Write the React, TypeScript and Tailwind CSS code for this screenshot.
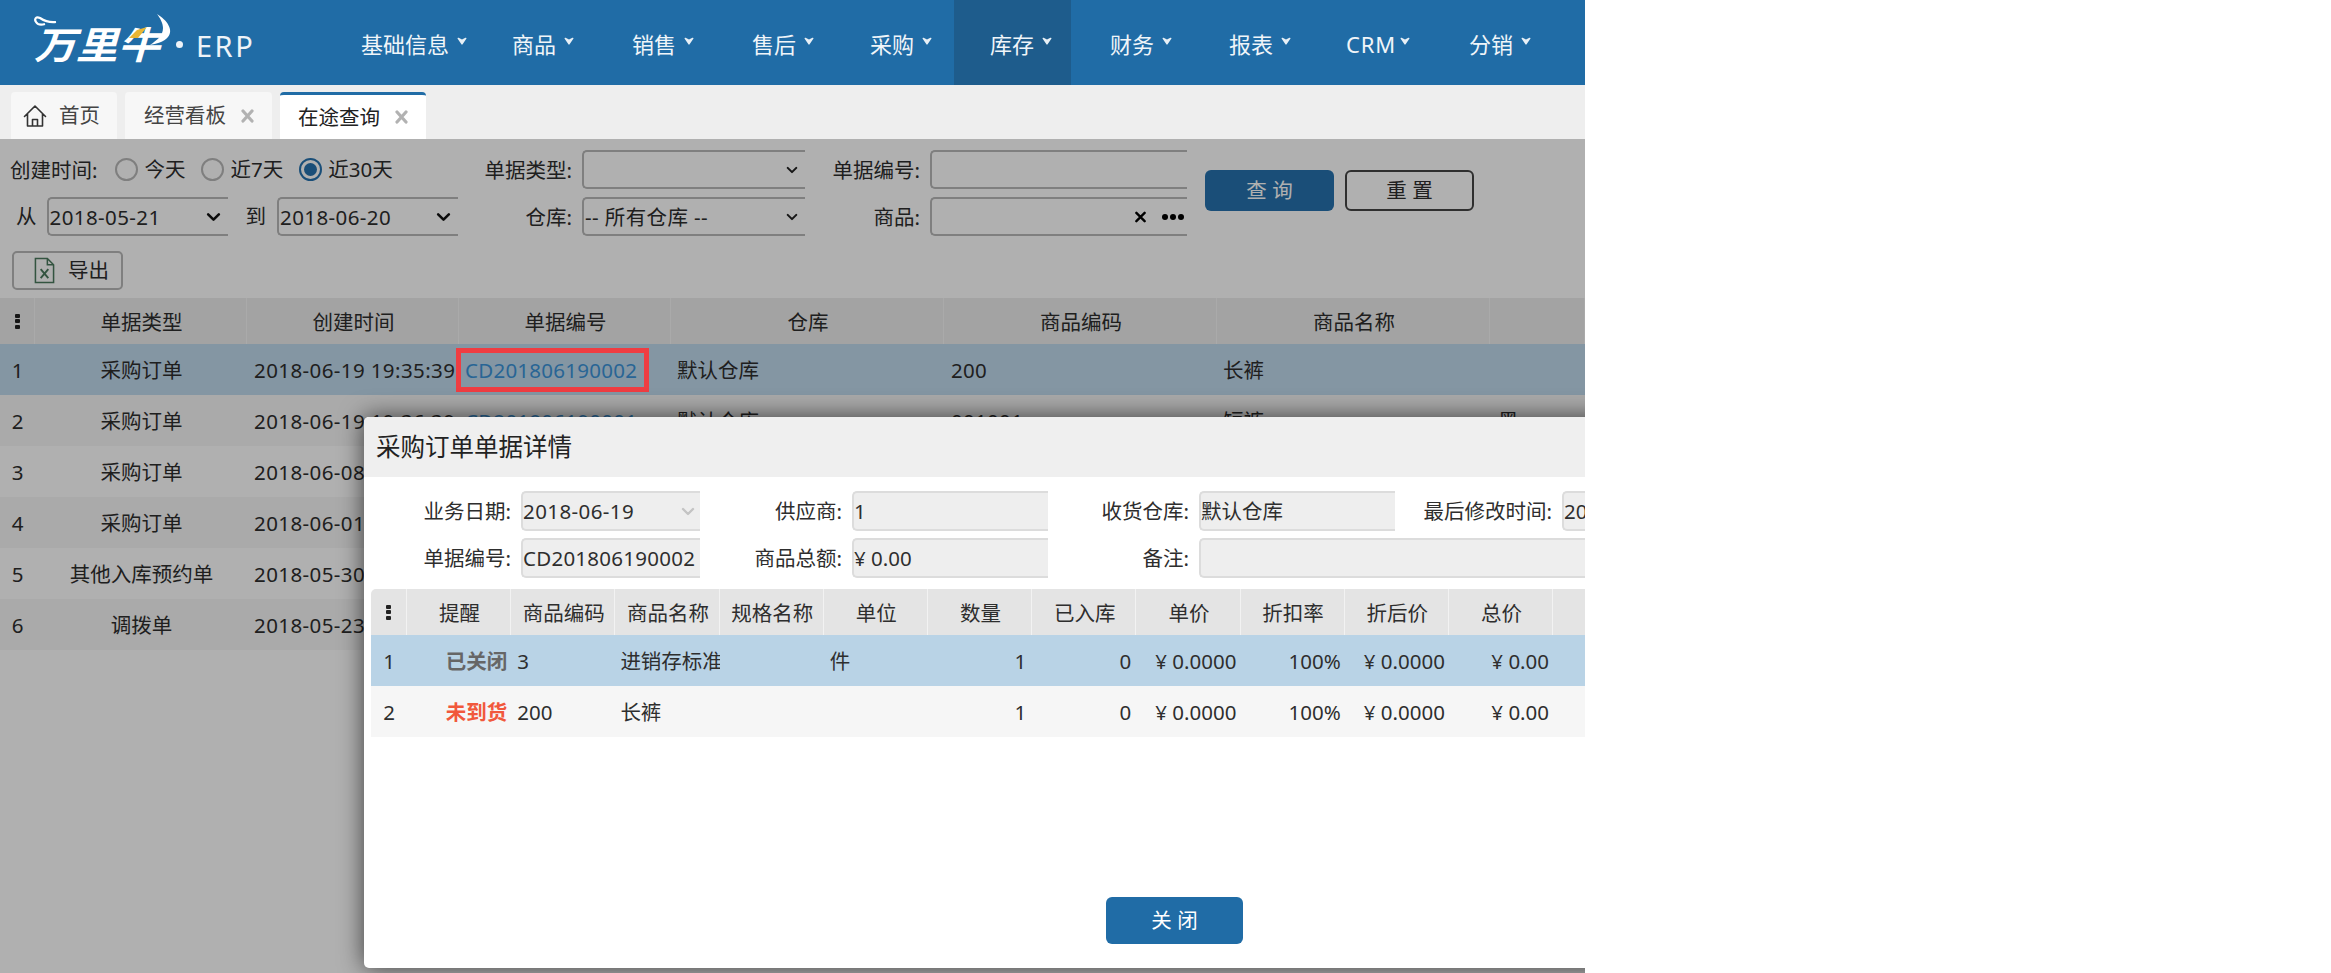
import React from "react";

const Chevron = ({ cls }: { cls: string }) => (
  <svg viewBox="0 0 14 9" className={cls} fill="none" stroke="currentColor" strokeWidth="2.4" strokeLinecap="round" strokeLinejoin="round">
    <path d="M2 2 L7 7 L12 2" />
  </svg>
);

const Caret = ({ crm }: { crm?: boolean }) => (
  <svg viewBox="0 0 10 8" className={`w-[10px] h-[8px] mb-[6px] shrink-0 ${crm ? "ml-[4px]" : "ml-[8px]"}`} fill="#e8f0f6">
    <path d="M0.5 1.5 Q0.5 0.4 1.6 0.8 L5 2.4 L8.4 0.8 Q9.5 0.4 9.5 1.5 L5.6 7.3 Q5 8 4.4 7.3 Z" />
  </svg>
);

const Kebab = () => (
  <div className="flex flex-col gap-[1.5px] items-center">
    <span className="w-[5px] h-[4px] rounded-[1px] bg-[#222]" />
    <span className="w-[5px] h-[4px] rounded-[1px] bg-[#222]" />
    <span className="w-[5px] h-[4px] rounded-[1px] bg-[#222]" />
  </div>
);

const TabX = () => (
  <svg viewBox="0 0 13 14" className="w-[13px] h-[14px] ml-[15px] shrink-0" stroke="#b2b2b2" strokeWidth="3.2" strokeLinecap="round">
    <path d="M2 2 L11 12 M11 2 L2 12" />
  </svg>
);

const Logo = () => (
  <svg viewBox="0 0 150 52" className="absolute left-[28px] top-[11px] w-[150px] h-[52px]">
    <path d="M28 11 C20 12 15 9 12 7 C8 5 6 8 8 11 C10 14 14 14 17 13" fill="none" stroke="#fff" strokeWidth="2.2" />
    <path d="M129 3 C139 9 146 19 140 26 C136 31 128 33 122 34 C129 29 135 25 135 17 C135 12 132 7 129 3 Z" fill="#fff" />
    <text x="0" y="0" transform="translate(6 48) skewX(-16) scale(1.02 0.92)" fill="#fff" fontSize="41" fontWeight="700" fontFamily="'Noto Sans CJK SC', sans-serif">万里牛</text>
    <polygon points="101,27 109,19 119,16 110,27" fill="#e9b634" />
  </svg>
);

const navItems = [
  { t: "基础信息", w: "w-[148px]" },
  { t: "商品", w: "w-[117px]" },
  { t: "销售", w: "w-[117px]" },
  { t: "售后", w: "w-[115px]" },
  { t: "采购", w: "w-[117px]" },
  { t: "库存", w: "w-[117px]", active: true },
  { t: "财务", w: "w-[116px]" },
  { t: "报表", w: "w-[114px]" },
  { t: "CRM", w: "w-[120px]", crm: true },
  { t: "分销", w: "w-[112px]" },
];

const Radio = ({ on }: { on?: boolean }) => (
  <span className={`w-[23px] h-[23px] rounded-full border-2 bg-transparent flex items-center justify-center shrink-0 ${on ? "border-[#2672ae]" : "border-[#b8b8b8]"}`}>
    {on && <span className="w-[13px] h-[13px] rounded-full bg-[#2672ae]" />}
  </span>
);

const Box = ({ cls, children }: { cls?: string; children?: React.ReactNode }) => (
  <div className={`h-[39px] flex items-center pl-[1px] pt-[1px] border-2 border-r-0 border-[#b8b8b8] rounded-l-[5px] ${cls ?? ""}`}>{children}</div>
);

const mainCols = "grid grid-cols-[35px_212px_212px_212px_273px_273px_273px_1fr]";
const mainHead = ["单据类型", "创建时间", "单据编号", "仓库", "商品编码", "商品名称", ""];
const mainRows = [
  ["采购订单", "2018-06-19 19:35:39", "CD201806190002", "默认仓库", "200", "长裤", ""],
  ["采购订单", "2018-06-19 19:36:39", "CD201806190001", "默认仓库", "001001", "短裤", "黑"],
  ["采购订单", "2018-06-08 10:21:06", "CD201806080001", "默认仓库", "001001", "短裤", "黑"],
  ["采购订单", "2018-06-01 15:02:47", "CD201806010001", "默认仓库", "200", "长裤", ""],
  ["其他入库预约单", "2018-05-30 09:44:18", "YY201805300001", "默认仓库", "200", "长裤", ""],
  ["调拨单", "2018-05-23 11:12:33", "DB201805230001", "默认仓库", "200", "长裤", ""],
];

const subCols = "grid grid-cols-[36px_repeat(11,104.2px)_1fr]";
const subHead = ["提醒", "商品编码", "商品名称", "规格名称", "单位", "数量", "已入库", "单价", "折扣率", "折后价", "总价", ""];
const subRows = [
  { bg: "bg-[#b9d3e6]", s: "已关闭", c: "text-[#666]", code: "3", name: "进销存标准", unit: "件" },
  { bg: "bg-[#f6f6f6]", s: "未到货", c: "text-[#f1583c]", code: "200", name: "长裤", unit: "" },
];

const Field = ({ children, cls }: { children?: React.ReactNode; cls?: string }) => (
  <div className={`h-[40px] flex items-center pt-[1px] bg-[#eeeeee] border-2 border-r-0 border-[#dcdcdc] rounded-l-[5px] overflow-hidden whitespace-nowrap ${cls ?? ""}`}>{children}</div>
);

const L = ({ children }: { children: React.ReactNode }) => (
  <div className="text-right pr-[10px] pt-[1px] whitespace-nowrap">{children}</div>
);

export default function App() {
  return (
    <div className="w-[2331px] h-[973px] bg-white overflow-hidden text-[20.5px] leading-none text-[#2e2e2e] [font-family:'Noto_Sans','Noto_Sans_CJK_SC',sans-serif]">
      <div className="relative w-[1585px] h-[973px] overflow-hidden bg-white">
        {/* Header */}
        <header className="relative h-[85px] bg-[#206ca6] flex text-white">
          <Logo />
          <div className="absolute left-[176px] top-[41px] w-[7px] h-[7px] rounded-full bg-[#eef3f8]" />
          <div className="absolute left-[196px] top-[29px] text-[29px] leading-[34px] font-normal tracking-[2.5px] text-[#eef3f8]">ERP</div>
          <nav className="flex ml-[325px] gap-[3px] text-[22px] text-[#f0f5f9]">
            {navItems.map((n) => (
              <div key={n.t} className={`${n.w} pl-[36px] pt-[3px] flex items-center shrink-0 ${n.active ? "bg-[#1e5c8c]" : ""}`}>
                <span className={n.crm ? "tracking-[0.8px]" : ""}>{n.t}</span>
                <Caret crm={n.crm} />
              </div>
            ))}
          </nav>
        </header>

        {/* Tabs */}
        <div className="h-[54px] bg-[#eeeeee] flex items-end pl-[11px] gap-[8px]">
          <div className="w-[106px] h-[47px] bg-[#f7f7f7] rounded-t-[4px] flex items-center pl-[12px] gap-[12px] text-[#444]">
            <svg viewBox="0 0 24 24" className="w-[24px] h-[24px]" fill="none" stroke="#333" strokeWidth="1.6" strokeLinejoin="round" strokeLinecap="round">
              <path d="M1.5 12.5 L12 2 L22.5 12.5 M4.5 10 V22 H19.5 V10 M9.5 22 V15.5 H14.5 V22" />
            </svg>
            <span>首页</span>
          </div>
          <div className="w-[147px] h-[47px] bg-[#f7f7f7] rounded-t-[4px] flex items-center pl-[19px] text-[#444]">
            <span>经营看板</span>
            <TabX />
          </div>
          <div className="w-[146px] h-[47px] bg-white rounded-t-[4px] border-t-[3px] border-[#206ca6] flex items-center pl-[18px] text-[#222]">
            <span>在途查询</span>
            <TabX />
          </div>
        </div>

        {/* Filters */}
        <section className="flex pt-[11px] h-[112px]">
          <div className="w-[476px] flex flex-col gap-[8px]">
            <div className="h-[39px] flex items-center pl-[10px]">
              <span className="whitespace-nowrap pt-[2px]">创建时间:</span>
              <span className="ml-[17px]"><Radio /></span>
              <span className="ml-[7px]">今天</span>
              <span className="ml-[15px]"><Radio /></span>
              <span className="ml-[7px]">近7天</span>
              <span className="ml-[16px]"><Radio on /></span>
              <span className="ml-[6px]">近30天</span>
            </div>
            <div className="h-[39px] flex items-center pl-[16px]">
              <span>从</span>
              <Box cls="w-[181px] ml-[10px] justify-between">
                <span className="tracking-[0.4px]">2018-05-21</span>
                <Chevron cls="w-[15px] h-[10px] mr-[7px] text-[#111]" />
              </Box>
              <span className="ml-[18px]">到</span>
              <Box cls="w-[181px] ml-[11px] justify-between">
                <span className="tracking-[0.4px]">2018-06-20</span>
                <Chevron cls="w-[15px] h-[10px] mr-[7px] text-[#111]" />
              </Box>
            </div>
          </div>
          <div className="grid grid-cols-[106px_223px_125px_257px] gap-y-[8px] content-start items-center">
            <L>单据类型:</L>
            <Box cls="justify-end"><Chevron cls="w-[12px] h-[8px] mr-[7px] text-[#222]" /></Box>
            <div className="text-right pr-[10px] pt-[1px]">单据编号:</div>
            <Box />
            <L>仓库:</L>
            <Box cls="justify-between">
              <span className="tracking-[0.4px] whitespace-pre">-- 所有仓库 --</span>
              <Chevron cls="w-[12px] h-[8px] mr-[7px] text-[#222]" />
            </Box>
            <div className="text-right pr-[10px] pt-[1px]">商品:</div>
            <Box cls="justify-end pr-[3px] gap-[16px] text-[#000]">
              <svg viewBox="0 0 12 12" className="w-[11px] h-[12px]" stroke="#000" strokeWidth="2.6" strokeLinecap="round"><path d="M1.5 1.5 L10.5 10.5 M10.5 1.5 L1.5 10.5" /></svg>
              <span className="flex gap-[2px]">
                <span className="w-[6px] h-[6px] rounded-full bg-black" />
                <span className="w-[6px] h-[6px] rounded-full bg-black" />
                <span className="w-[6px] h-[6px] rounded-full bg-black" />
              </span>
            </Box>
          </div>
          <div className="flex gap-[11px] ml-[18px] mt-[20px] h-[41px]">
            <div className="w-[129px] bg-[#2672ae] rounded-[6px] text-white flex items-center justify-center">查 询</div>
            <div className="w-[129px] border-2 border-[#444] rounded-[6px] flex items-center justify-center">重 置</div>
          </div>
        </section>
        <div className="h-[47px] pl-[12px]">
          <div className="w-[111px] h-[39px] border-2 border-[#b8b8b8] rounded-[5px] flex items-center pl-[20px] gap-[13px]">
            <svg viewBox="0 0 22 28" className="w-[21px] h-[27px] shrink-0" fill="none" stroke="#4b7a5e" strokeWidth="1.6">
              <path d="M1.5 1.5 H14 L20.5 8 V26.5 H1.5 Z M14 1.5 V8 H20.5" />
              <path d="M7 12.5 L15 22 M15 12.5 L7 22" strokeWidth="2" />
            </svg>
            <span>导出</span>
          </div>
        </div>

        {/* Main table */}
        <div className={`${mainCols} h-[46px] bg-[#ececec]`}>
          <div className="flex items-center justify-center border-r border-[#f6f6f6]"><Kebab /></div>
          {mainHead.map((h, i) => (
            <div key={i} className="flex items-center justify-center pt-[2px] pl-[2px] border-r border-[#f6f6f6] whitespace-nowrap">{h}</div>
          ))}
        </div>
        {mainRows.map((r, i) => (
          <div key={i} className={`${mainCols} h-[51px] pt-[2px] items-center ${i === 0 ? "bg-[#c0d9ec]" : i % 2 === 1 ? "bg-[#f6f6f6]" : "bg-white"}`}>
            <div className="text-center">{i + 1}</div>
            <div className="text-center pl-[1px] whitespace-nowrap">{r[0]}</div>
            <div className="pl-[7px] whitespace-nowrap tracking-[0.4px]">{r[1]}</div>
            <div className="pl-[6px] whitespace-nowrap tracking-[0.25px] text-[#3a93d8]">{r[2]}</div>
            <div className="pl-[6px] whitespace-nowrap">{r[3]}</div>
            <div className="pl-[7px] whitespace-nowrap tracking-[0.3px]">{r[4]}</div>
            <div className="pl-[6px] whitespace-nowrap">{r[5]}</div>
            <div className="pl-[8px] whitespace-nowrap">{r[6]}</div>
          </div>
        ))}

        {/* Dim layer */}
        <div className="absolute left-0 right-0 top-[139px] bottom-0 bg-black/[.31]" />
        {/* Annotation */}
        <div className="absolute left-[456px] top-[348px] w-[193px] h-[44px] border-[5px] border-[#ef3d42]" />

        {/* Modal */}
        <div className="absolute left-[364px] top-[417px] w-[1621px] h-[551px] bg-white rounded-[5px] shadow-[0_0_24px_rgba(0,0,0,0.65)] flex flex-col">
          <div className="h-[60px] bg-[#efefef] rounded-t-[5px] flex items-center pl-[12px] pt-[1px] text-[24.5px] text-[#222] shrink-0">采购订单单据详情</div>
          <div className="grid grid-cols-[157px_179px_152px_196px_151px_196px_167px_1fr] gap-y-[7px] items-center pt-[14px]">
            <L>业务日期:</L>
            <Field cls="justify-between">
              <span className="tracking-[0.4px]">2018-06-19</span>
              <Chevron cls="w-[14px] h-[9px] mr-[5px] text-[#c4c4c4]" />
            </Field>
            <L>供应商:</L>
            <Field>1</Field>
            <L>收货仓库:</L>
            <Field>默认仓库</Field>
            <L>最后修改时间:</L>
            <Field>2018-06-19 19:35:39</Field>
            <L>单据编号:</L>
            <Field><span className="tracking-[0.25px]">CD201806190002</span></Field>
            <L>商品总额:</L>
            <Field>¥ 0.00</Field>
            <L>备注:</L>
            <Field cls="col-span-3" />
          </div>
          <div className="ml-[7px] mt-[11px]">
            <div className={`${subCols} h-[46px] bg-[#e4e4e4] rounded-t-[5px]`}>
              <div className="flex items-center justify-center border-r border-[#f2f2f2]"><Kebab /></div>
              {subHead.map((h, i) => (
                <div key={i} className="flex items-center justify-center pt-[2px] pl-[2px] border-r border-[#f2f2f2] whitespace-nowrap">{h}</div>
              ))}
            </div>
            {subRows.map((r, i) => (
              <div key={i} className={`${subCols} h-[51px] pt-[2px] items-center ${r.bg}`}>
                <div className="text-center">{i + 1}</div>
                <div className={`text-right pr-[4px] font-bold whitespace-nowrap ${r.c}`}>{r.s}</div>
                <div className="pl-[6px]">{r.code}</div>
                <div className="pl-[5px] overflow-hidden whitespace-nowrap">{r.name}</div>
                <div />
                <div className="pl-[6px]">{r.unit}</div>
                <div className="text-right pr-[6px]">1</div>
                <div className="text-right pr-[5px]">0</div>
                <div className="text-right pr-[4px]">¥ 0.0000</div>
                <div className="text-right pr-[4px]">100%</div>
                <div className="text-right pr-[4px]">¥ 0.0000</div>
                <div className="text-right pr-[4px]">¥ 0.00</div>
                <div />
              </div>
            ))}
          </div>
          <div className="mt-auto pb-[24px] flex justify-center">
            <div className="w-[137px] h-[47px] bg-[#206ca6] rounded-[6px] text-white flex items-center justify-center">关 闭</div>
          </div>
        </div>
      </div>
    </div>
  );
}
